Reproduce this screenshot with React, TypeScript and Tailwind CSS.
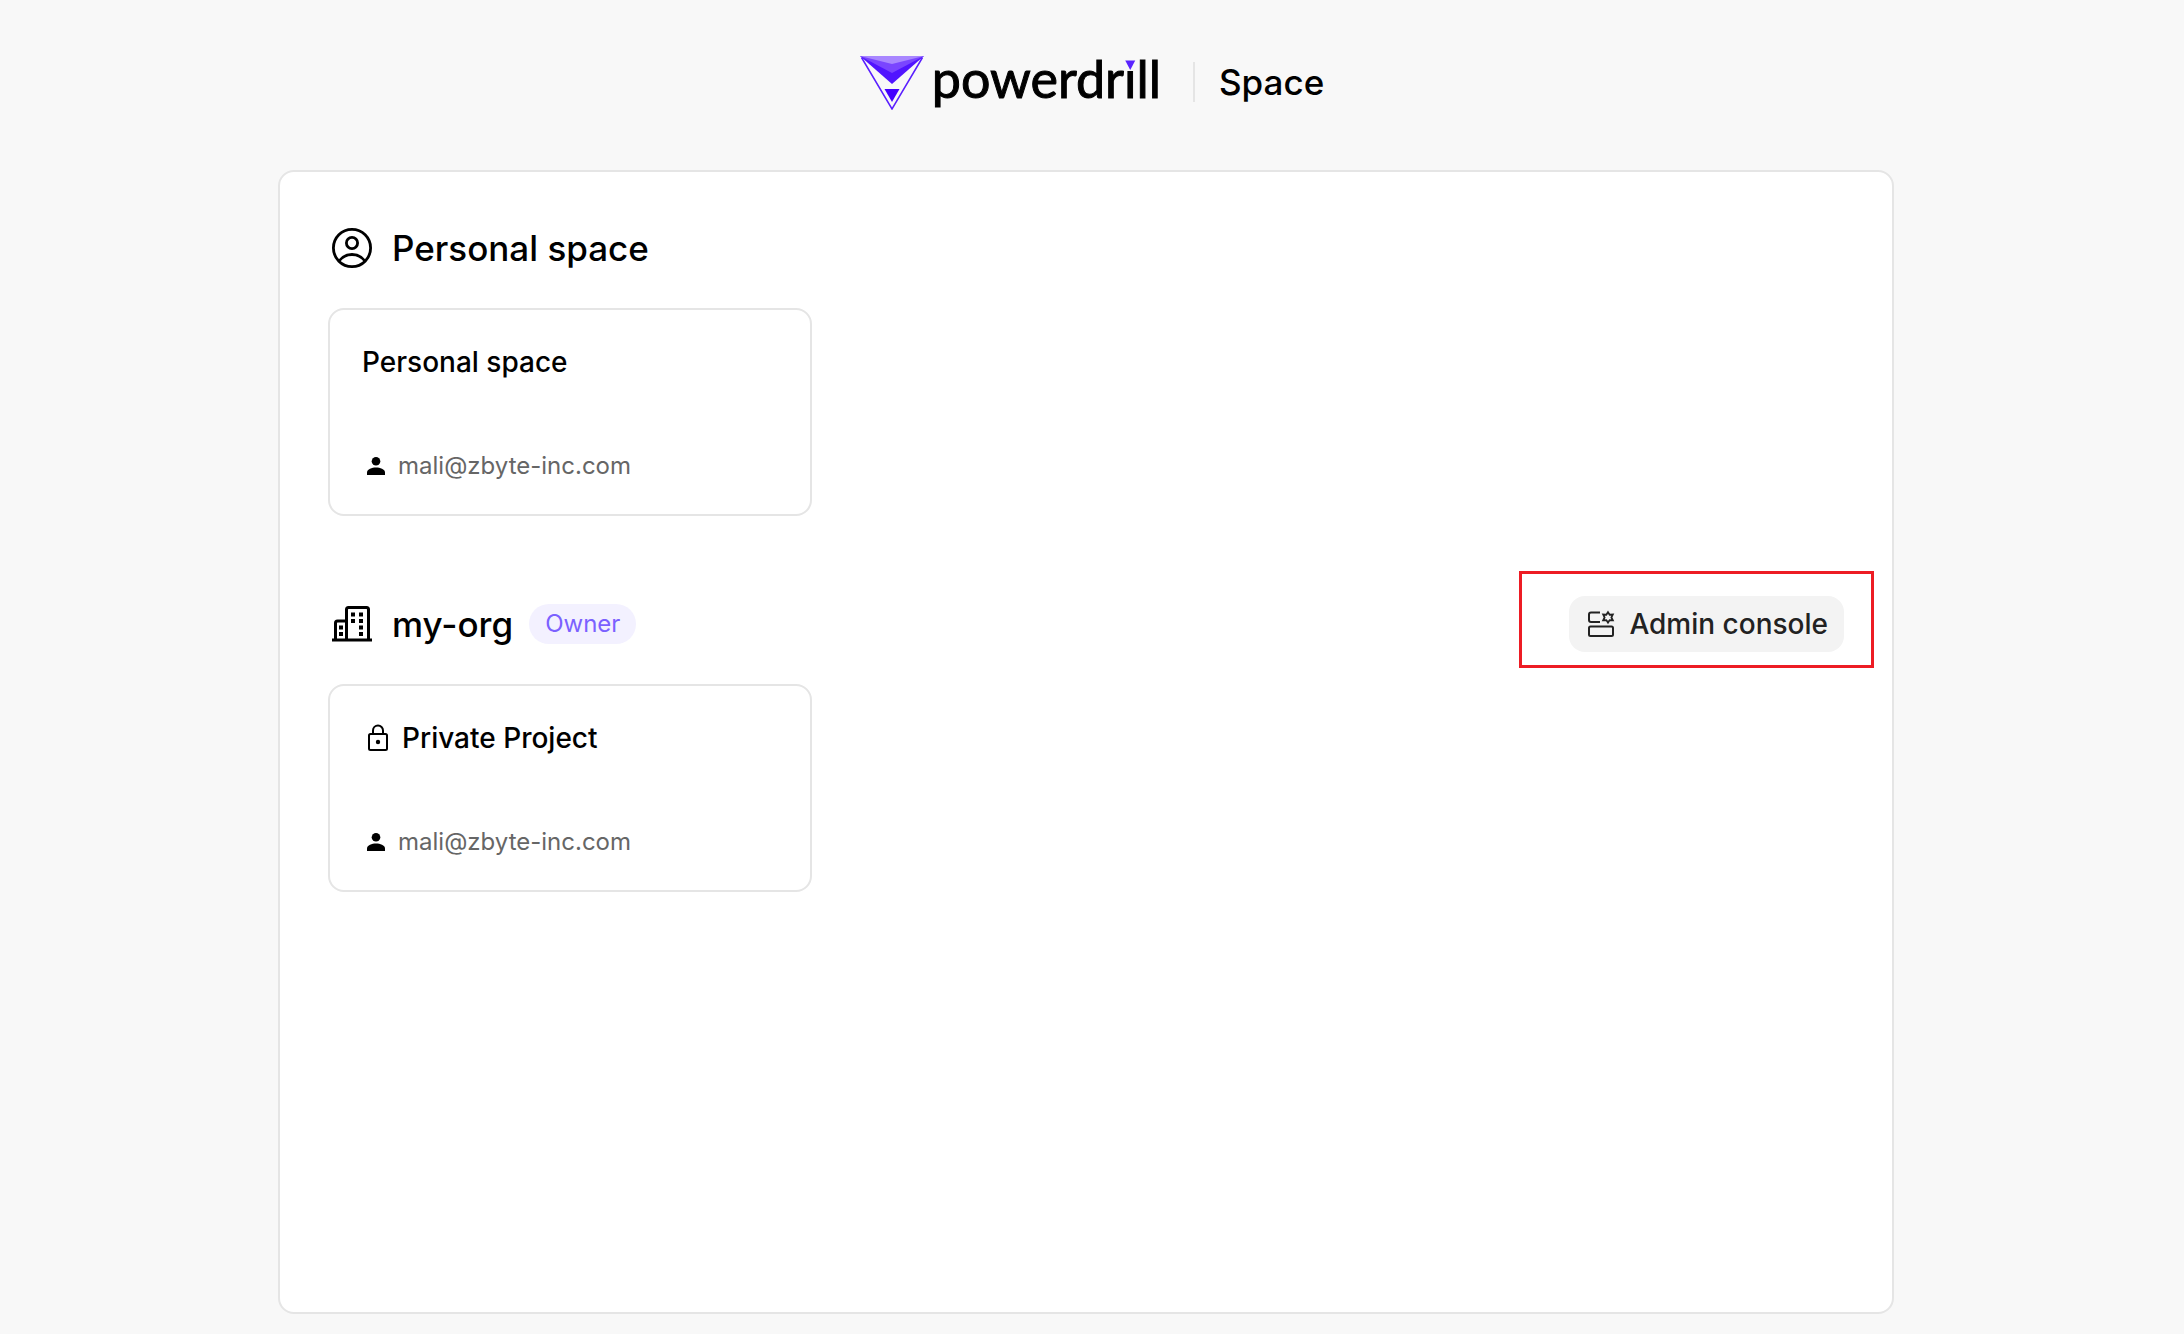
import type { ReactNode } from 'react';

function LogoMark() {
  return (
    <svg viewBox="0 -2 64 56" className="h-14 w-16 shrink-0" aria-hidden="true">
      <path d="M1.5 1.5 32 53 62.5 1.5" fill="none" stroke="#5a1fff" strokeWidth="1.5" />
      <path d="M0 0h64L32 28Z" fill="#5114ff" />
      <path d="M0 0h64L32 17Z" fill="#7a45ff" />
      <path d="M0 0h64L32 8Z" fill="#a987ff" />
      <path d="M24.5 33h15L32 46Z" fill="#4400ff" />
    </svg>
  );
}

function Wordmark() {
  return (
    <span className="flex pb-2 font-[Lato,sans-serif] text-[52px] leading-[48px] font-normal text-black [-webkit-text-stroke:1px_black]">
      powerdr
      <span className="relative">
        i
        <svg viewBox="0 0 12 13" className="absolute top-1 left-0 h-[13px] w-full" aria-hidden="true">
          <path d="M0 0h12v13H0Z" fill="#f8f8f8" />
          <path d="M1 2.500h10L6 12Z" fill="#5a24ff" />
        </svg>
      </span>
      ll
    </span>
  );
}

function UserCircleIcon() {
  return (
    <svg viewBox="0 0 48 48" className="size-12 shrink-0" fill="none" stroke="currentColor" strokeWidth="2.8" aria-hidden="true">
      <circle cx="24" cy="24" r="18.6" />
      <circle cx="24" cy="19" r="5.6" />
      <path d="M11 37c3-4 7.500-6.500 13-6.500S34 33 37 37" />
    </svg>
  );
}

function BuildingIcon() {
  return (
    <svg viewBox="0 0 48 48" className="size-12 shrink-0" fill="none" stroke="currentColor" aria-hidden="true">
      <path d="M4 40h40" strokeWidth="3" />
      <path d="M7.500 40V23q0-2 2-2h9M18.500 40V9.500q0-2 2-2h18q2 0 2 2V40" strokeWidth="3" />
      <path
        d="M11 25.500h4v4h-4zM11 32h4v4h-4zM23 12.500h4v4h-4zM31 12.500h4v4h-4zM23 19h4v4h-4zM31 19h4v4h-4zM31 25.500h4v4h-4zM31 32h4v4h-4z"
        fill="currentColor"
        stroke="none"
      />
    </svg>
  );
}

function PersonIcon() {
  return (
    <svg viewBox="0 0 28 28" className="size-7 shrink-0 text-black" fill="currentColor" aria-hidden="true">
      <circle cx="14" cy="9.300" r="4.300" />
      <path d="M5 23v-2.500c0-3.400 5-5 9-5s9 1.600 9 5V23Z" />
    </svg>
  );
}

function LockIcon() {
  return (
    <svg viewBox="0 0 32 32" className="size-8 shrink-0" fill="none" stroke="currentColor" strokeWidth="2" aria-hidden="true">
      <rect x="7" y="12" width="18" height="16" rx="1.500" />
      <path d="M11 12V8.500a5 5 0 0 1 10 0V12" />
      <circle cx="16" cy="20" r="2.200" fill="currentColor" stroke="none" />
    </svg>
  );
}

function ConsoleIcon() {
  return (
    <svg viewBox="0 0 32 32" className="size-8 shrink-0" fill="none" stroke="currentColor" strokeWidth="2" aria-hidden="true">
      <rect x="4" y="18.500" width="24" height="9.500" rx="1.500" />
      <path d="M15 4.500H6q-2 0-2 2V12q0 2 2 2h9" />
      <path d="M23 4.200 24.700 6.700 27.800 6.500 26.400 9.400 27.800 12.300 24.700 12.100 23 14.600 21.300 12.100 18.200 12.300 19.600 9.400 18.200 6.500 21.300 6.700Z" strokeWidth="1.800" />
    </svg>
  );
}

function SpaceCard({ title, email, icon }: { title: string; email: string; icon?: ReactNode }) {
  return (
    <a href="#" className="flex h-52 flex-col justify-between rounded-2xl border-2 border-[#e5e5e5] p-8">
      <h3 className="flex items-center gap-2 text-[28px] leading-10 font-medium">
        {icon}
        {title}
      </h3>
      <p className="flex items-center gap-2 text-2xl leading-8 text-[#666666]">
        <PersonIcon />
        {email}
      </p>
    </a>
  );
}

function SpaceSection({ icon, title, badge, action, children }: { icon: ReactNode; title: string; badge?: string; action?: ReactNode; children: ReactNode }) {
  return (
    <section className="flex flex-col gap-8">
      <div className="flex h-14 items-center justify-between">
        <div className="flex items-center gap-4">
          {icon}
          <h2 className="text-[35px] leading-10 font-medium">{title}</h2>
          {badge && <span className="rounded-full bg-[#f3f1ff] px-4 text-2xl leading-10 text-[#7b61ff]">{badge}</span>}
        </div>
        {action}
      </div>
      <div className="grid grid-cols-3 gap-8">{children}</div>
    </section>
  );
}

export default function App() {
  return (
    <div className="flex min-h-screen flex-col bg-[#f8f8f8] pb-5 font-[Inter,sans-serif] text-black">
      <header className="flex h-[170px] items-center justify-center pb-1.5">
        <div className="flex items-center gap-2">
          <LogoMark />
          <Wordmark />
        </div>
        <div className="mr-6 ml-8 h-10 w-0.5 bg-[#e5e5e5]" />
        <h1 className="text-[35px] leading-10 font-medium">Space</h1>
      </header>
      <div className="flex flex-1 flex-col pr-3">
        <main className="mx-auto flex w-full max-w-[1616px] flex-1 flex-col gap-20 rounded-2xl border-2 border-[#e5e5e5] bg-white p-12">
          <SpaceSection icon={<UserCircleIcon />} title="Personal space">
            <SpaceCard title="Personal space" email="mali@zbyte-inc.com" />
          </SpaceSection>
          <SpaceSection
            icon={<BuildingIcon />}
            title="my-org"
            badge="Owner"
            action={
              <div className="relative">
                <button type="button" className="flex h-14 items-center gap-3 rounded-2xl bg-[#f3f3f3] px-4 text-[28px] font-medium text-[#222222]">
                  <ConsoleIcon />
                  Admin console
                </button>
                <div className="pointer-events-none absolute -top-[25px] -right-[30px] -bottom-4 -left-[50px] border-3 border-[#ed1c24]" />
              </div>
            }
          >
            <SpaceCard title="Private Project" email="mali@zbyte-inc.com" icon={<LockIcon />} />
          </SpaceSection>
        </main>
      </div>
    </div>
  );
}
